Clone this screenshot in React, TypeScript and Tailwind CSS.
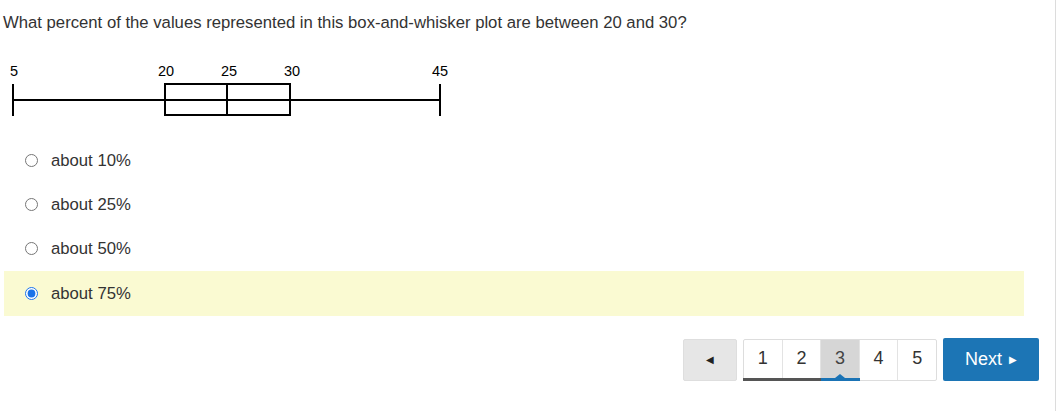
import React, { useState } from 'react';

const options = ['about 10%', 'about 25%', 'about 50%', 'about 75%'];

const BoxPlot: React.FC = () => {
  const labels = [
    { x: 14, t: '5' },
    { x: 166, t: '20' },
    { x: 229, t: '25' },
    { x: 292, t: '30' },
    { x: 440, t: '45' },
  ];
  return (
    <svg width="460" height="60" viewBox="0 60 460 60" className="block">
      {labels.map((l) => (
        <text key={l.t} x={l.x} y={76} textAnchor="middle" fontSize="14.5" fontFamily="'Liberation Sans', Arial, sans-serif" fill="#000">
          {l.t}
        </text>
      ))}
      <g stroke="#000" strokeWidth="2" fill="none">
        <line x1="13" y1="100" x2="165" y2="100" />
        <line x1="290" y1="100" x2="440" y2="100" />
        <line x1="13" y1="84" x2="13" y2="116" />
        <line x1="440" y1="84" x2="440" y2="116" />
        <rect x="165" y="84" width="125" height="31" />
        <line x1="227" y1="84" x2="227" y2="115" />
        <line x1="165" y1="100" x2="290" y2="100" />
      </g>
    </svg>
  );
};

export default function App() {
  const [selected, setSelected] = useState(3);
  const pages = [1, 2, 3, 4, 5];
  const current = 3;

  return (
    <div className="w-[1056px] h-[411px] bg-white border-r border-[#dcdcdc] font-['Liberation_Sans',Arial,sans-serif] text-[#333]">
      <div className="pl-[3px] pt-[12px] text-[16.7px] leading-[22px]">
        What percent of the values represented in this box-and-whisker plot are between 20 and 30?
      </div>
      <div className="mt-[26px]">
        <BoxPlot />
      </div>
      <div className="mt-[18px] ml-[4px] w-[1020px] flex flex-col">
        {options.map((o, i) => (
          <label
            key={o}
            className={`flex items-center h-[44.4px] pl-[21px] cursor-pointer ${selected === i ? 'bg-[#fafad2]' : ''}`}
          >
            <input
              type="radio"
              name="answer"
              checked={selected === i}
              onChange={() => setSelected(i)}
              className="w-[13px] h-[13px] m-0 accent-[#1a73e8]"
            />
            <span className="ml-[13px] text-[16.7px]">{o}</span>
          </label>
        ))}
      </div>
      <div className="mt-[23px] pr-[16px] flex justify-end items-start">
        <button className="w-[54px] h-[42px] bg-[#e6e6e6] border border-[#dedede] rounded-[2px] flex items-center justify-center text-[#222] text-[10px]">
          ◀
        </button>
        <div className="ml-[6px] w-[194px] h-[42px] flex border border-[#ddd] rounded-[2px] relative">
          {pages.map((p) => (
            <div
              key={p}
              className={`flex-1 h-full flex items-center justify-center text-[18px] relative ${p > 1 ? 'border-l border-[#e3e3e3]' : ''} ${p === current ? 'bg-[#d6d6d6] text-[#444]' : 'text-[#333]'}`}
            >
              <span className="-mt-[2px]">{p}</span>
              {p === current && (
                <div className="absolute left-1/2 -translate-x-1/2 bottom-[2px] w-0 h-0 border-l-[5px] border-r-[5px] border-b-[4px] border-l-transparent border-r-transparent border-b-[#1a73b5]" />
              )}
            </div>
          ))}
          <div className="absolute -left-px bottom-[-1px] w-[78px] h-[3px] bg-[#555]" />
          <div className="absolute left-[77px] bottom-[-1px] w-[39px] h-[3px] bg-[#1a73b5]" />
        </div>
        <button className="ml-[6px] w-[96px] h-[43px] -mt-[1px] bg-[#1c75b5] rounded-[2px] text-white text-[18px] flex items-center justify-center gap-[7px]">
          <span>Next</span>
          <span className="text-[10px]">▶</span>
        </button>
      </div>
    </div>
  );
}
